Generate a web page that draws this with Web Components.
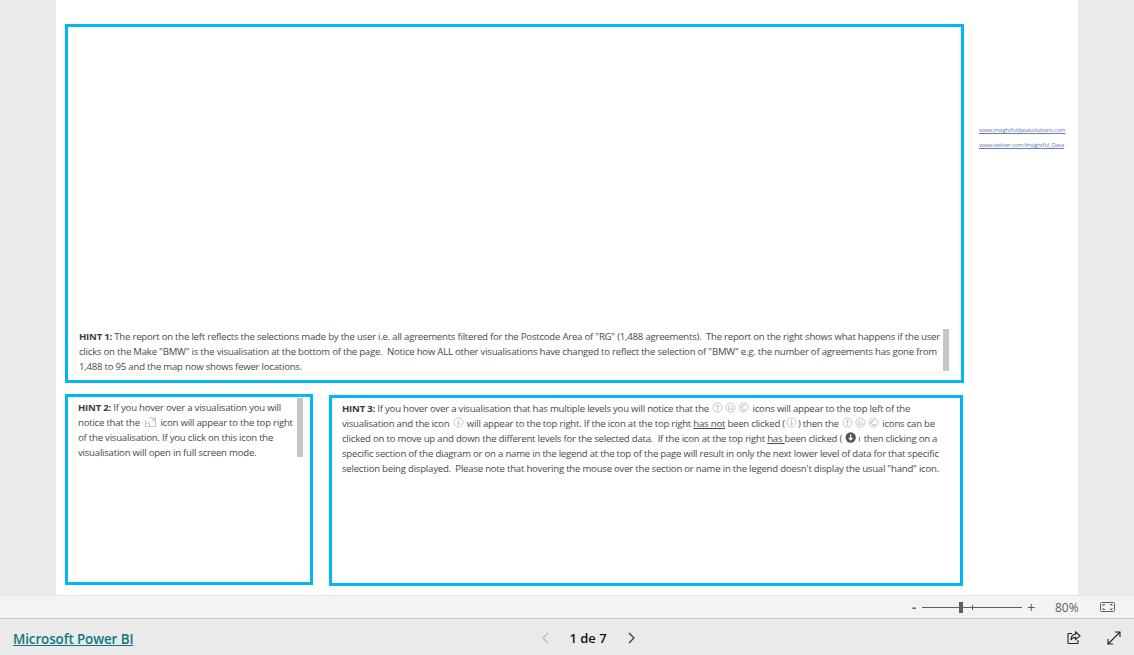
<!DOCTYPE html>
<html>
<head>
<meta charset="utf-8">
<title>Microsoft Power BI</title>
<style>
  html, body { margin: 0; height: 100%; overflow: hidden; }
  body { background: #eaeaea; font-family: "Open Sans", "Noto Sans", "Liberation Sans", sans-serif; }
</style>
</head>
<body>
<report-viewer>
  <report-canvas>
    <hint-box slot="top" style="--w:899px;--h:359px;--pad-left:11px;--pad-bottom:6px;--bar-right:12px;--bar-top:302px;--bar-h:42px;--justify:flex-end"><b>HINT 1:</b> The report on the left reflects the selections made by the user i.e. all agreements filtered for the Postcode Area of "RG" (1,488 agreements).  The report on the right shows what happens if the user<br>clicks on the Make "BMW" is the visualisation at the bottom of the page.  Notice how ALL other visualisations have changed to reflect the selection of "BMW" e.g. the number of agreements has gone from<br>1,488 to 95 and the map now shows fewer locations.</hint-box>
    <hint-box slot="left" style="--w:248px;--h:191px;--pad-left:10px;--pad-top:3px;--bar-right:7px;--bar-top:1px;--bar-h:59px"><b>HINT 2:</b> If you hover over a visualisation you will<br>notice that the <pbi-icon name="focus"></pbi-icon> icon will appear to the top right<br>of the visualisation. If you click on this icon the<br>visualisation will open in full screen mode.</hint-box>
    <hint-box slot="right" style="--w:634px;--h:191px;--pad-left:10px;--pad-top:3px"><b>HINT 3:</b> If you hover over a visualisation that has multiple levels you will notice that the <pbi-icon name="up"></pbi-icon><pbi-icon name="double"></pbi-icon><pbi-icon name="expand"></pbi-icon> icons will appear to the top left of the<br>visualisation and the icon <pbi-icon name="down"></pbi-icon> will appear to the top right. If the icon at the top right <u>has not</u> been clicked (<pbi-icon name="down"></pbi-icon>) then the <pbi-icon name="up"></pbi-icon><pbi-icon name="double"></pbi-icon><pbi-icon name="expand"></pbi-icon> icons can be<br>clicked on to move up and down the different levels for the selected data.  If the icon at the top right <u>has </u>been clicked ( <pbi-icon name="solid"></pbi-icon> then clicking on a<br>specific section of the diagram or on a name in the legend at the top of the page will result in only the next lower level of data for that specific<br>selection being displayed.  Please note that hovering the mouse over the section or name in the legend doesn't display the usual "hand" icon.</hint-box>
    <a slot="links" href="#">www.insightfuldatasolutions.com</a>
    <a slot="links" href="#">www.twitter.com/Insightful_Data</a>
  </report-canvas>
  <zoom-bar></zoom-bar>
  <page-footer></page-footer>
</report-viewer>

<script>
class ReportViewer extends HTMLElement {
  connectedCallback() {
    this.attachShadow({ mode: 'open' });
    this.shadowRoot.innerHTML = `
      <style>
        :host { display: flex; flex-direction: column; height: 655px; }
      </style>
      <slot></slot>
    `;
  }
}

class ReportCanvas extends HTMLElement {
  connectedCallback() {
    this.attachShadow({ mode: 'open' });
    this.shadowRoot.innerHTML = `
      <style>
        :host { display: flex; width: 1022px; height: 595px; margin-left: 56px; background: #fff; box-sizing: border-box; padding: 24px 0 0 9px; }
        .hints { display: flex; flex-direction: column; gap: 11px; width: 899px; }
        .row { display: flex; gap: 16px; }
        .right { margin-top: 1px; }
        .links { display: flex; flex-direction: column; gap: 6px; margin: 102px 0 0 15px; }
        ::slotted(a) { color: #6a79bd; font-size: 6px; line-height: 9px; white-space: nowrap; letter-spacing: -.21px; }
      </style>
      <div class="hints">
        <slot name="top"></slot>
        <div class="row">
          <slot name="left"></slot>
          <div class="right"><slot name="right"></slot></div>
        </div>
      </div>
      <div class="links"><slot name="links"></slot></div>
    `;
  }
}

class HintBox extends HTMLElement {
  connectedCallback() {
    this.attachShadow({ mode: 'open' });
    this.shadowRoot.innerHTML = `
      <style>
        :host { display: flex; flex-direction: column; justify-content: var(--justify, flex-start); position: relative; box-sizing: border-box;
          width: var(--w); height: var(--h); border: 3px solid #01b8f5;
          padding: var(--pad-top, 0) 0 var(--pad-bottom, 0) var(--pad-left, 0);
          color: #4a4a4a; font-size: 9.6px; line-height: 15px; white-space: pre; letter-spacing: -.225px; }
        ::slotted(b) { color: #3c3c3c; }
        .bar { position: absolute; right: var(--bar-right, 0); top: var(--bar-top, 0); width: 6px; height: var(--bar-h, 0); background: #c6c6c6; }
      </style>
      <div class="text"><slot></slot></div>
      <div class="bar"></div>
    `;
  }
}

const ICONS = {
  focus: '<path d="M1.5 4V10.5H11.5V2H5"/><path d="M1.5 7H5.5V10.5"/><path d="M7.5 6L10 3.5M8.2 3.2H10.2V5.2"/>',
  up: '<circle cx="6" cy="6" r="5"/><path d="M6 9.2V3.2M3.8 5.4L6 3.2L8.2 5.4"/>',
  down: '<circle cx="6" cy="6" r="5"/><path d="M6 2.8V8.8M3.8 6.6L6 8.8L8.2 6.6"/>',
  double: '<circle cx="6" cy="6" r="5"/><path d="M4.3 3V8.8M2.8 7.3L4.3 8.8L5.8 7.3M7.7 3V8.8M6.2 7.3L7.7 8.8L9.2 7.3"/>',
  expand: '<circle cx="6" cy="6" r="5"/><path d="M8.5 4A3 3 0 1 0 8.5 8M4 7V5H6M5.5 8.5H8.5"/>',
  solid: '<circle cx="6" cy="6" r="5.6" fill="#555" stroke="none"/><path d="M6 2.8V8.5M4 6.5L6 8.5L8 6.5" stroke="#fff" stroke-width="1.3"/><path d="M15.5 5.5V10.5" stroke="#6a6a85" stroke-width="1"/>'
};

class PbiIcon extends HTMLElement {
  connectedCallback() {
    this.attachShadow({ mode: 'open' });
    const name = this.getAttribute('name');
    const box = name === 'solid' ? '0 0 16 12' : '0 0 12 12';
    this.shadowRoot.innerHTML = `<style>
        :host { display: inline-block; white-space: normal; width: 11px; height: 11px; margin: 0 1px; vertical-align: -1px; }
        :host([name="focus"]) { width: 12px; height: 12px; margin: 0 2px; vertical-align: -2px; }
        :host([name="solid"]) { width: 15px; }
        svg { display: block; width: 100%; height: 100%; fill: none; stroke: #b4b4b4; stroke-width: .8; }
      </style><svg viewBox="${box}">${ICONS[name]}</svg>`;
  }
}

class ZoomBar extends HTMLElement {
  connectedCallback() {
    this.attachShadow({ mode: 'open' });
    this.shadowRoot.innerHTML = `
      <style>
        :host { display: flex; align-items: center; box-sizing: border-box; height: 24px; background: #f3f3f3; border-top: 1px solid #e3e3e3; border-bottom: 1px solid #c8c8c8; padding-left: 912px; color: #605e5c; font-size: 12px; }
        .minus { width: 10px; font-weight: 700; font-size: 13px; line-height: 1; }
        .track { position: relative; width: 100px; height: 1px; background: #605e5c; }
        .thumb { position: absolute; left: 37px; top: -5px; width: 4px; height: 11px; background: #605e5c; }
        .tick { position: absolute; left: 50px; top: -2px; width: 1px; height: 5px; background: #605e5c; }
        .plus { width: 10px; margin-left: 5px; font-size: 15px; line-height: 1; }
        .pct { margin-left: 18px; width: 40px; }
        svg { width: 15px; height: 12px; margin-left: 5px; fill: none; stroke: #605e5c; }
      </style>
      <span class="minus">-</span>
      <div class="track"><div class="thumb"></div><div class="tick"></div></div>
      <span class="plus">+</span>
      <span class="pct">80%</span>
      <svg viewBox="0 0 15 12"><rect x=".5" y="1.5" width="14" height="9" rx="1"/><path d="M3 5V3.5H5M10 3.5H12V5M3 7V8.5H5M10 8.5H12V7"/></svg>
    `;
  }
}

class PageFooter extends HTMLElement {
  connectedCallback() {
    this.attachShadow({ mode: 'open' });
    this.shadowRoot.innerHTML = `
      <style>
        :host { display: grid; grid-template-columns: 1fr auto 1fr; align-items: center; flex: 1; padding: 2px 13px 0; background: #eaeaea; }
        a { color: #117680; font-size: 13.4px; font-weight: 600; letter-spacing: -.1px; }
        .pager { display: flex; align-items: center; gap: 19px; margin-left: 43px; color: #111; font-size: 13px; font-weight: 600; }
        .pager svg:last-child { margin-left: 1px; }
        .actions { display: flex; justify-content: flex-end; gap: 26px; align-items: center; }
        svg { display: block; fill: none; }
      </style>
      <div><a href="#">Microsoft Power BI</a></div>
      <div class="pager">
        <svg width="9" height="12" viewBox="0 0 9 12" stroke="#b8b8b8" stroke-width="1.2"><path d="M7 1L2 6L7 11"/></svg>
        <span>1 de 7</span>
        <svg width="9" height="12" viewBox="0 0 9 12" stroke="#333" stroke-width="1.2"><path d="M2 1L7 6L2 11"/></svg>
      </div>
      <div class="actions">
        <svg width="14" height="14" viewBox="0 0 14 14" stroke="#222" stroke-width="1.1"><path d="M5 2.5H1.5Q1 2.5 1 3V12Q1 12.5 1.5 12.5H10.5Q11 12.5 11 12V9"/><path d="M8.5 1L13 4.8L8.5 8.5V6.4C6.5 6.2 5 7 4 9C4 6 5.6 3.6 8.5 3.3Z"/></svg>
        <svg width="14" height="14" viewBox="0 0 14 14" stroke="#222" stroke-width="1.1"><path d="M1 13L13 1M8 1H13V6M1 8V13H6"/></svg>
      </div>
    `;
  }
}

customElements.define('report-viewer', ReportViewer);
customElements.define('report-canvas', ReportCanvas);
customElements.define('hint-box', HintBox);
customElements.define('pbi-icon', PbiIcon);
customElements.define('zoom-bar', ZoomBar);
customElements.define('page-footer', PageFooter);
</script>
</body>
</html>
